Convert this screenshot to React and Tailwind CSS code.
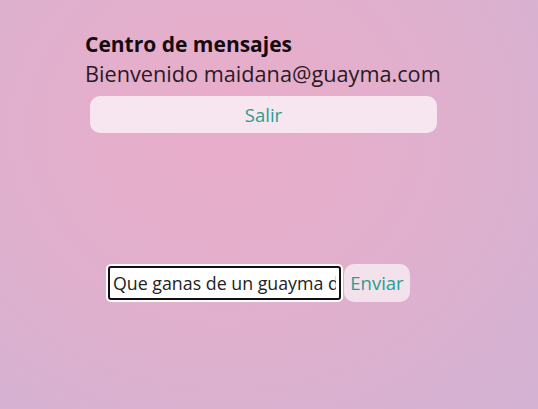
import React from 'react';

const App = () => {
  return (
    <div
      className="w-full h-[409px] overflow-hidden bg-[radial-gradient(ellipse_at_42%_32%,#e9adca_0%,#e3afcc_35%,#d3b2d3_100%)] font-['Open_Sans','Noto_Sans',sans-serif]"
    >
      <div className="pl-[85px] pt-[30px] w-[441px]">
        <h1 className="text-[21px] leading-[28px] font-bold text-[#140a10]">Centro de mensajes</h1>
        <p className="text-[21.7px] leading-[32px] text-[#2a1a24]">Bienvenido maidana@guayma.com</p>
        <button
          type="button"
          className="ml-[5px] mt-[6px] w-[347px] h-[37px] rounded-[10px] bg-[#f7e6ef] text-[18.5px] text-[#2a9d8f]"
        >
          Salir
        </button>
      </div>

      <div className="flex items-center pl-[108px] mt-[131px] gap-[3px]">
        <input
          readOnly
          value="Que ganas de un guayma de la"
          className="w-[233px] h-[34px] border-2 border-[#111] rounded-[3px] bg-white px-[3px] text-[17.8px] text-[#222] outline-none shadow-[0_0_0_2px_#ffffff]"
        />
        <button
          type="button"
          className="w-[66px] h-[38px] rounded-[10px] bg-[#f3e1ec] text-[18.5px] text-[#2a9d8f]"
        >
          Enviar
        </button>
      </div>
    </div>
  );
};

export default App;
